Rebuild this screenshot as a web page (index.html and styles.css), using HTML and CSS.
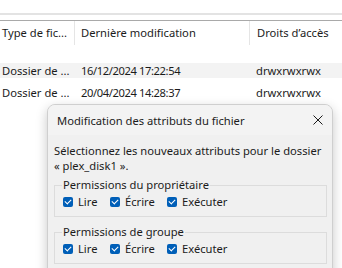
FILE: index.html
```html
<!DOCTYPE html>
<html lang="fr">
<head>
    <meta charset="UTF-8">
    <title>Attributs</title>
    <link rel="stylesheet" href="styles.css">
</head>
<body>

<div class="list">
    <div class="topStrip"></div>
    <div class="ruleLight"></div>
    <div class="ruleGap"></div>
    <div class="ruleDark"></div>
    <div class="head">
        <div class="c1">Type de fic...</div>
        <div class="c2">Dernière modification</div>
        <div class="c3">Droits d’accès</div>
    </div>
    <div class="rows">
        <div class="row sel">
            <div class="c1">Dossier de ...</div>
            <div class="c2 date">16/12/2024 17:22:54</div>
            <div class="c3">drwxrwxrwx</div>
        </div>
        <div class="row">
            <div class="c1">Dossier de ...</div>
            <div class="c2 date">20/04/2024 14:28:37</div>
            <div class="c3">drwxrwxrwx</div>
        </div>
    </div>
</div>

<div class="dlg">
    <div class="dlgTitle">
        <span>Modification des attributs du fichier</span>
        <svg class="close" width="10" height="10" viewBox="0 0 10 10">
            <path d="M0.5 0.5L9.5 9.5M9.5 0.5L0.5 9.5" stroke="#1a1a1a" stroke-width="1"/>
        </svg>
    </div>
    <div class="dlgBody">
        <p class="intro">Sélectionnez les nouveaux attributs pour le dossier<br>« plex_disk1 ».</p>

        <fieldset class="grp">
            <legend>Permissions du propriétaire</legend>
            <div class="checks">
                <label><span class="box"></span>Lire</label>
                <label><span class="box"></span>Écrire</label>
                <label><span class="box"></span>Exécuter</label>
            </div>
        </fieldset>

        <fieldset class="grp">
            <legend>Permissions de groupe</legend>
            <div class="checks">
                <label><span class="box"></span>Lire</label>
                <label><span class="box"></span>Écrire</label>
                <label><span class="box"></span>Exécuter</label>
            </div>
        </fieldset>
    </div>
</div>

</body>
</html>
```

FILE: styles.css
```css
*{
    margin:0;
    padding:0;
    box-sizing: border-box;
}
html,body{
    width: 342px;
    height: 268px;
    overflow: hidden;
    background: #fff;
}
body{
    font-family: "Noto Sans", "Open Sans", sans-serif;
    font-size: 11.2px;
    color: #1b1b1b;
    position: relative;
}
.topStrip{
    height: 13px;
}
.ruleLight{
    height: 2px;
    background: #e3e3e3;
}
.ruleGap{
    height: 5px;
}
.ruleDark{
    height: 1px;
    background: #a9a9a9;
}
.head,
.row{
    display: flex;
    white-space: nowrap;
}
.head{
    height: 24px;
    line-height: 24px;
}
.head .c1{
    width: 75px;
    padding-left: 2px;
    border-right: 1px solid #e5e5e5;
}
.head .c2{
    width: 175px;
    padding-left: 6px;
    border-right: 1px solid #e5e5e5;
}
.head .c3{
    padding-left: 7px;
}
.rows{
    margin-top: 18px;
    display: flex;
    flex-direction: column;
    gap: 6px;
}
.row{
    height: 15px;
    line-height: 15px;
}
.row + .row{
    margin-top: 1px;
}
.row.sel{
    background: #f3f3f3;
}
.row .c1{
    width: 75px;
    padding-left: 2px;
}
.row .c2{
    width: 175px;
    padding-left: 6px;
}
.row .c3{
    padding-left: 6px;
}
.date{
    letter-spacing: -0.4px;
}

/* dialog */
.dlg{
    position: absolute;
    left: 47px;
    top: 104px;
    width: 286px;
    height: 200px;
    background: #f0f0f0;
    border: 1px solid #cfcfcf;
    border-radius: 8px;
    box-shadow: 0 4px 12px rgba(0,0,0,0.22);
    overflow: hidden;
}
.dlgTitle{
    height: 30px;
    display: flex;
    align-items: center;
    justify-content: space-between;
    padding: 0 9px 0 9px;
    background: #f3f3f3;
    white-space: nowrap;
}
.close{
    display: block;
}
.dlgBody{
    padding: 8px 6px 0 6px;
}
.intro{
    line-height: 15px;
    white-space: nowrap;
}
.grp{
    border: 1px solid #dcdcdc;
    margin-top: 5px;
    padding: 2px 0 7px 8px;
    width: 273px;
}
.grp + .grp{
    margin-top: 8px;
}
.grp legend{
    padding: 0 1px;
    margin-left: -1px;
    line-height: 14px;
    white-space: nowrap;
}
.checks{
    display: flex;
    height: 15px;
    line-height: 15px;
    white-space: nowrap;
}
.checks label{
    display: flex;
    align-items: center;
}
.checks label:nth-child(1){
    width: 47px;
}
.checks label:nth-child(2){
    width: 57px;
}
.box{
    width: 10px;
    height: 10px;
    margin-right: 5px;
    border-radius: 2px;
    background: #005fb8;
    position: relative;
    flex: none;
}
.box::after{
    content: "";
    position: absolute;
    left: 2px;
    top: 2px;
    width: 5px;
    height: 3px;
    border-left: 1px solid #fff;
    border-bottom: 1px solid #fff;
    transform: rotate(-45deg);
}
```
